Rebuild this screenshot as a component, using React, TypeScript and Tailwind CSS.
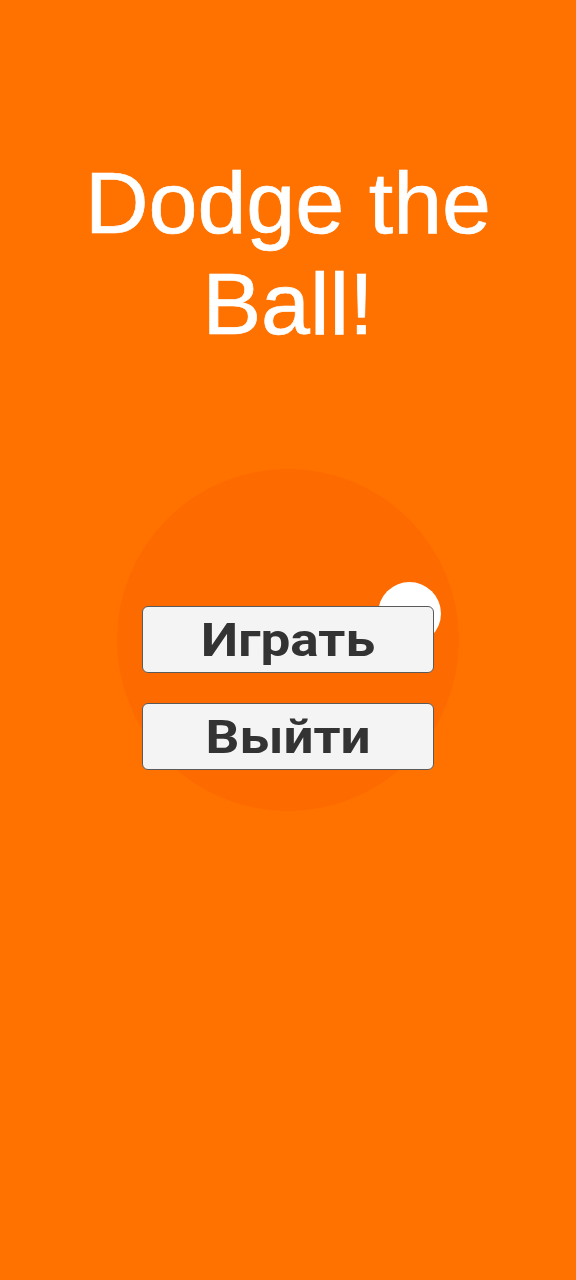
import React from "react";

function MenuButton({ label }: { label: string }) {
  return (
    <button
      type="button"
      className="flex h-[67px] w-[292px] items-center justify-center rounded-[6px] border border-[#5a5a5a] bg-[#f4f4f4] font-['Roboto',sans-serif] text-[47px] font-bold leading-none text-[#333333]"
    >
      <span className="inline-block scale-x-[1.13]">{label}</span>
    </button>
  );
}

export default function App() {
  return (
    <div className="flex min-h-screen w-full flex-col items-center bg-[#ff7200]">
      <h1 className="pt-[152px] text-center font-['Liberation_Sans',Arial,sans-serif] text-[88px] font-normal leading-[101px] text-white [-webkit-text-stroke:0.7px_white]">
        Dodge the
        <br />
        Ball!
      </h1>

      <div className="relative mt-[115px] h-[342px] w-[342px]">
        {/* soft arena disc behind the menu */}
        <div className="absolute inset-0 rounded-full bg-[#fd6a00]" />
        {/* the bouncing ball */}
        <div className="absolute left-[261px] top-[113px] h-[63px] w-[63px] rounded-full bg-white" />

        <div className="relative flex flex-col items-center gap-[30px] pt-[137px]">
          <MenuButton label="Играть" />
          <MenuButton label="Выйти" />
        </div>
      </div>
    </div>
  );
}
